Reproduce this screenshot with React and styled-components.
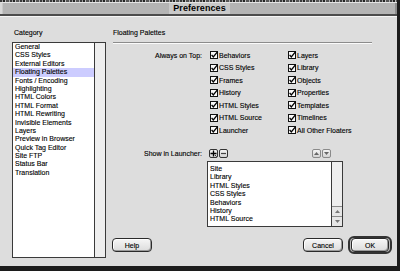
import { Fragment } from 'react'
import styled, { createGlobalStyle } from 'styled-components'

/* --------------Global--------------- */
const Global = createGlobalStyle`
html, body {
  margin: 0;
  padding: 0;
  background: #1c1c1c;
}
body {
  font-family: "Liberation Sans", Arial, sans-serif;
  font-size: 7px;
  color: #000;
  -webkit-text-stroke: 0.12px #000;
}
`

/* --------------Window chrome--------------- */
const Window = styled.div`
width: 397px;
height: 266px;
background: #dddddd;
display: flex;
flex-direction: column;
`
const Noise = styled.div`
height: 2px;
background: repeating-linear-gradient(90deg, #3a3a3a 0 2px, #9c9c9c 2px 3px, #222 3px 5px, #bcbcbc 5px 6px, #555 6px 9px, #aaa 9px 10px);
`
const TitleBar = styled.div`
height: 12px;
box-sizing: border-box;
background: #b4b4b4;
border-top: 1px solid #e4e4e4;
border-left: 2px solid #d8d8d8;
box-shadow: inset 1px 0 #c8c8c8, inset -2px 0 #8e8e8e;
display: flex;
justify-content: center;
align-items: center;
`
const Title = styled.span`
background: #c9c9c9;
padding: 0 4px;
font-size: 9px;
font-weight: bold;
line-height: 11px;
letter-spacing: 0.1px;
-webkit-text-stroke: 0;
`
const TitleRule = styled.div`
height: 2px;
background: #4c4c4c;
`
const Body = styled.div`
flex: 1;
border-top: 1px solid #f6f6f6;
padding: 11px 5px 0 12px;
display: flex;
gap: 7px;
`

/* --------------Panes--------------- */
const Sidebar = styled.div`
width: 94px;
display: flex;
flex-direction: column;
`
const Main = styled.div`
width: 279px;
display: flex;
flex-direction: column;
`
const PaneLabel = styled.div`
height: 9px;
line-height: 9px;
padding-left: ${p => p.$indent || 0}px;
`
const Separator = styled.div`
margin-top: 5px;
width: 259px;
border-top: 1px solid #8c8c8c;
border-bottom: 1px solid #fbfbfb;
`

/* --------------Lists--------------- */
const ListBox = styled.div`
margin-top: ${p => p.$top}px;
margin-left: ${p => p.$left || 0}px;
width: ${p => p.$w}px;
height: ${p => p.$h}px;
box-sizing: border-box;
border: 1px solid #3a3a3a;
background: #fff;
display: flex;
`
const Items = styled.ul`
flex: 1;
margin: 0;
padding: ${p => p.$pad || 0}px 0 0;
list-style: none;
`
const Item = styled.li`
line-height: 8.4px;
height: 8.4px;
padding-left: 2px;
white-space: nowrap;
background: ${p => (p.$selected ? '#ccccff' : 'transparent')};
`
const ScrollTrack = styled.div`
width: 10px;
background: #eeeeee;
border-left: 1px solid #3a3a3a;
display: flex;
flex-direction: column;
justify-content: flex-end;
`
const ScrollArrow = styled.div`
height: 9px;
border-top: 1px solid #8a8a8a;
display: flex;
align-items: center;
justify-content: center;
background: #e6e6e6;
`

/* --------------Options--------------- */
const OptionsGrid = styled.div`
margin-top: 5px;
display: grid;
grid-template-columns: 97px 78px 1fr;
grid-auto-rows: 12.5px;
align-items: center;
`
const RowLabel = styled.div`
text-align: right;
padding-right: 8px;
white-space: nowrap;
`
const Check = styled.label`
display: flex;
align-items: center;
gap: 1px;
white-space: nowrap;
grid-column: ${p => p.$col};
`
const LauncherRow = styled.div`
margin-top: 10.5px;
width: 218px;
height: 12px;
display: flex;
align-items: center;
`
const LauncherLabel = styled.div`
width: 89px;
text-align: right;
padding-right: 7px;
white-space: nowrap;
`
const IconButton = styled.div`
width: 9px;
height: 9px;
box-sizing: border-box;
border: 1px solid ${p => (p.$dim ? '#8a8a8a' : '#333')};
border-radius: 2px;
background: linear-gradient(#f4f4f4, #d4d4d4);
margin-left: ${p => p.$gap || 0}px;
display: flex;
align-items: center;
justify-content: center;
`
const Spacer = styled.div`
flex: 1;
`

/* --------------Buttons--------------- */
const ButtonRow = styled.div`
margin-top: 9px;
height: 18px;
display: flex;
align-items: center;
gap: 5px;
`
const PushButton = styled.button`
font-family: inherit;
font-size: 7px;
color: #000;
width: ${p => p.$w}px;
height: 14px;
padding: 0;
margin-left: ${p => p.$left || 0}px;
box-sizing: border-box;
border: 1px solid #2a2a2a;
border-radius: 4px;
background: linear-gradient(#f6f6f6, #dcdcdc);
box-shadow: inset -1px -1px #9a9a9a, inset 1px 1px #fff;
`
const DefaultRing = styled.div`
width: 44px;
height: 18px;
box-sizing: border-box;
border: 2px solid #333;
border-radius: 6px;
background: #bdbdbd;
display: flex;
align-items: center;
justify-content: center;
`

const CheckBox = () => (
  <svg width="8" height="8" viewBox="0 0 8 8">
    <rect x="0.5" y="0.5" width="7" height="7" fill="#fafafa" stroke="#111" />
    <path d="M1.6 3.9 L3.3 6 L7.4 0.9" fill="none" stroke="#000" strokeWidth="1.3" />
  </svg>
)

const Tri = ({ up, color = '#666' }) => (
  <svg width="5" height="3" viewBox="0 0 5 3">
    <path d={up ? 'M0 3 L2.5 0 L5 3 Z' : 'M0 0 L2.5 3 L5 0 Z'} fill={color} />
  </svg>
)

const categories = [
  'General', 'CSS Styles', 'External Editors', 'Floating Palettes', 'Fonts / Encoding',
  'Highlighting', 'HTML Colors', 'HTML Format', 'HTML Rewriting', 'Invisible Elements',
  'Layers', 'Preview in Browser', 'Quick Tag Editor', 'Site FTP', 'Status Bar', 'Translation'
]
const left = ['Behaviors', 'CSS Styles', 'Frames', 'History', 'HTML Styles', 'HTML Source', 'Launcher']
const right = ['Layers', 'Library', 'Objects', 'Properties', 'Templates', 'Timelines', 'All Other Floaters']
const launcher = ['Site', 'Library', 'HTML Styles', 'CSS Styles', 'Behaviors', 'History', 'HTML Source']

const App = () => {
  return (
    <>
      <Global />
      <Window>
        <Noise />
        <TitleBar><Title>Preferences</Title></TitleBar>
        <TitleRule />
        <Body>
          <Sidebar>
            <PaneLabel $indent={2}>Category</PaneLabel>
            <ListBox $top={5} $w={94} $h={216}>
              <Items>
                {categories.map(c => (
                  <Item key={c} $selected={c === 'Floating Palettes'}>{c}</Item>
                ))}
              </Items>
              <ScrollTrack />
            </ListBox>
          </Sidebar>

          <Main>
            <PaneLabel>Floating Palettes</PaneLabel>
            <Separator />
            <OptionsGrid>
              {left.map((l, i) => (
                <Fragment key={l}>
                  {i === 0 ? <RowLabel>Always on Top:</RowLabel> : <div />}
                  <Check $col={2}><CheckBox />{l}</Check>
                  <Check $col={3}><CheckBox />{right[i]}</Check>
                </Fragment>
              ))}
            </OptionsGrid>

            <LauncherRow>
              <LauncherLabel>Show in Launcher:</LauncherLabel>
              <IconButton>
                <svg width="7" height="7" viewBox="0 0 7 7">
                  <path d="M3.5 0.5 V6.5 M0.5 3.5 H6.5" stroke="#000" strokeWidth="1.3" />
                  <path d="M5 5 L6.5 6.6" stroke="#000" strokeWidth="0.8" />
                </svg>
              </IconButton>
              <IconButton $gap={1}>
                <svg width="7" height="7" viewBox="0 0 7 7">
                  <path d="M1 3.5 H6" stroke="#444" strokeWidth="1.2" />
                </svg>
              </IconButton>
              <Spacer />
              <IconButton $dim><Tri up /></IconButton>
              <IconButton $dim $gap={1}><Tri /></IconButton>
            </LauncherRow>

            <ListBox $top={2} $left={94} $w={136} $h={66}>
              <Items $pad={3}>
                {launcher.map(l => <Item key={l}>{l}</Item>)}
              </Items>
              <ScrollTrack>
                <ScrollArrow><Tri up color="#777" /></ScrollArrow>
                <ScrollArrow><Tri color="#777" /></ScrollArrow>
              </ScrollTrack>
            </ListBox>

            <ButtonRow>
              <PushButton $w={40} $left={-1}>Help</PushButton>
              <Spacer />
              <PushButton $w={40}>Cancel</PushButton>
              <DefaultRing><PushButton $w={38}>OK</PushButton></DefaultRing>
            </ButtonRow>
          </Main>
        </Body>
      </Window>
    </>
  )
}

export default App
